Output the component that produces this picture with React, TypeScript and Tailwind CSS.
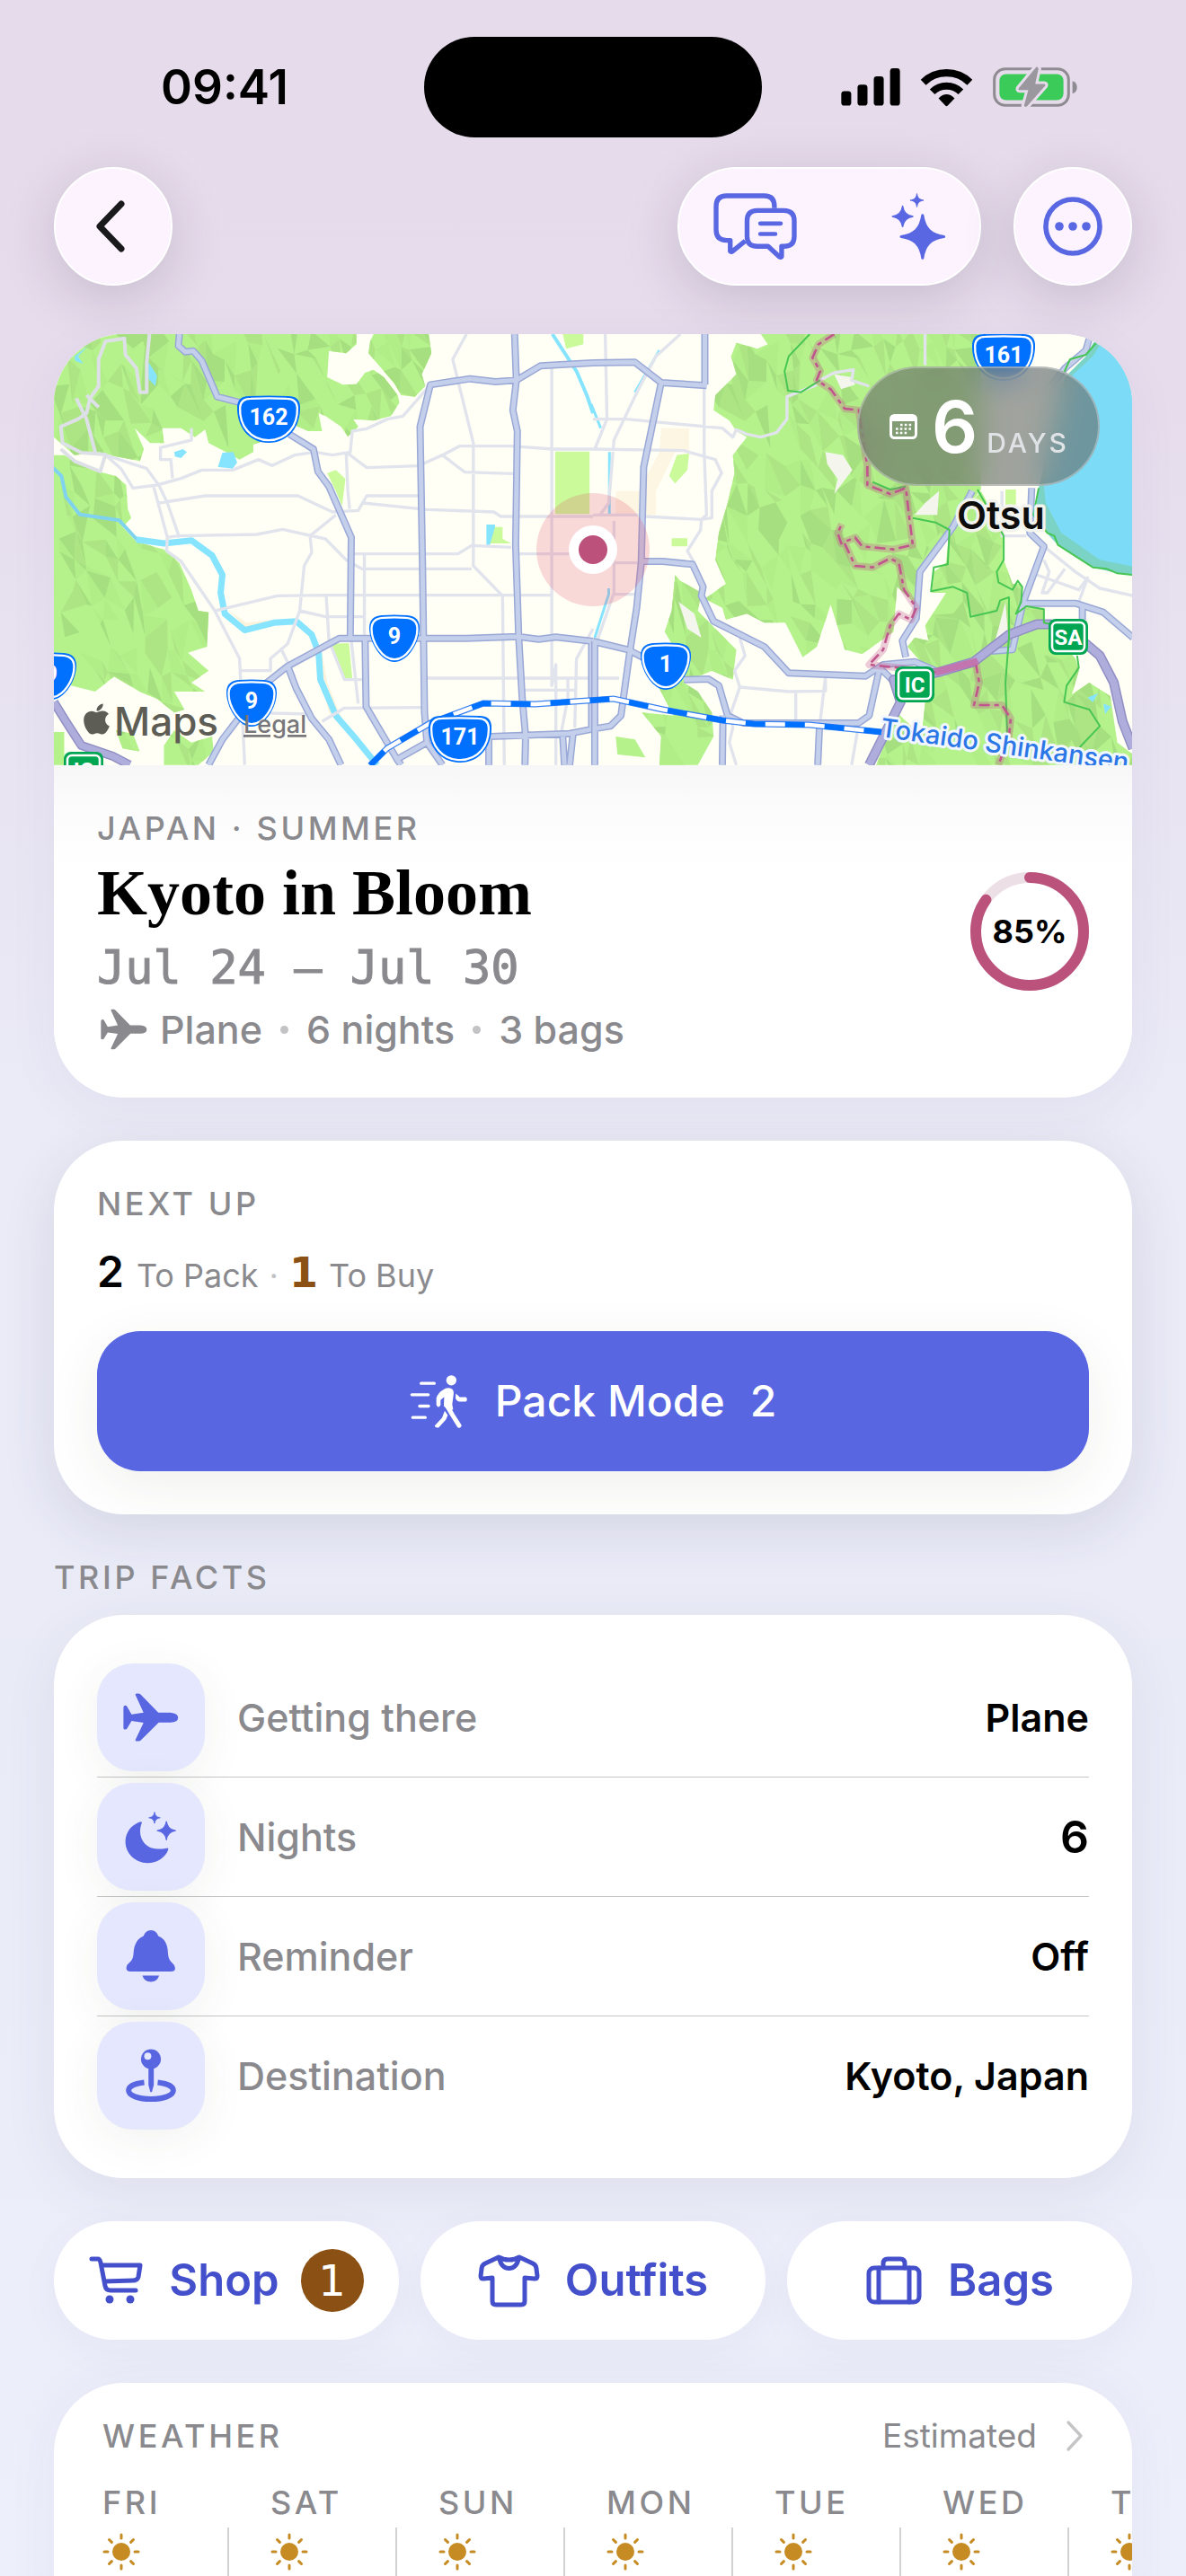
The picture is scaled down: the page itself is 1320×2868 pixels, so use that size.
import React from "react";
import { FaApple } from "react-icons/fa";

const STAR =
  "M0-1C.09-.38.38-.09 1 0C.38.09.09.38 0 1C-.09.38-.38.09-1 0C-.38-.09-.09-.38 0-1Z";

function Star({ x, y, r }: { x: number; y: number; r: number }) {
  return (
    <path
      d={STAR}
      transform={`translate(${x} ${y}) scale(${r * 0.93})`}
      fill="currentColor"
      stroke="currentColor"
      strokeWidth={0.13}
      strokeLinejoin="round"
    />
  );
}

function PlaneIcon({ className }: { className: string }) {
  return (
    <svg viewBox="201 211 158 139" className={className} fill="currentColor" aria-hidden="true">
      <path d="M202 253Q202 247 208 247Q211 247 213 251L225 272L259 267L236 217Q235 213 239 213H245Q249 213 252 217L301 267H335Q357 269 357 281Q357 294 335 295H302L252 345Q249 348 245 348H239Q235 348 236 344L259 296L225 291L213 311Q211 315 207 315Q202 315 202 311Z" />
    </svg>
  );
}

function MoonIcon() {
  return (
    <svg viewBox="208 528 150 150" className="h-[60px] w-[60px]" fill="currentColor" aria-hidden="true">
      <path d="M254 561C229 569 212 590 212 617C212 650 240 676 273 676C299 676 323 661 331 639Q332 633 326 635C318 637 310 637 301 637C272 636 253 615 253 588C253 578 255 572 257 566Q259 560 254 561Z" />
      <Star x={293} y={550} r={17} />
      <Star x={326} y={586} r={27} />
    </svg>
  );
}

function BellIcon() {
  return (
    <svg viewBox="200 860 146 145" className="h-[60px] w-[60px]" fill="currentColor" aria-hidden="true">
      <path d="M273 862C283 862 290 869 293 878C310 885 318 900 319 922C320 945 328 945 336 957Q344 974 328 974H217Q202 974 208 957C217 945 225 945 226 922C228 900 236 885 253 878C256 869 263 862 273 862Z" />
      <path d="M250 985H295C292 996 283 1002 273 1002C262 1002 253 996 250 985Z" />
    </svg>
  );
}

function PinIcon() {
  return (
    <svg viewBox="200 1188 146 152" className="h-[60px] w-[60px]" fill="currentColor" aria-hidden="true">
      <path
        d="M254 1283C225 1286 210 1295 210 1306C210 1320 238 1330 273 1330C308 1330 336 1320 336 1306C336 1295 320 1286 292 1283"
        fill="none"
        stroke="currentColor"
        strokeWidth="15"
      />
      <path d="M266 1235H281V1290L276 1309Q273 1312 271 1309L266 1290Z" />
      <circle cx="273" cy="1217" r="28" />
      <circle cx="264" cy="1209" r="10" fill="#e4e7fd" />
    </svg>
  );
}

function StatusBar() {
  return (
    <div className="grid h-[186px] shrink-0 grid-cols-[1fr_auto_1fr] items-start pt-[41px]">
      <div className="flex h-[113px] items-center justify-center pl-7">
        <span className="text-[53px] leading-none font-semibold">09:41</span>
      </div>
      <div className="h-[112px] w-[376px] rounded-full bg-black" />
      <div className="flex h-[112px] items-center gap-[22px] pl-[88px]">
        <svg viewBox="50 77 197 125" className="h-[42px] w-[66px]" aria-label="Signal">
          <rect x="51" y="153" width="33" height="48" rx="10" />
          <rect x="105" y="131" width="33" height="70" rx="10" />
          <rect x="159" y="104" width="33" height="97" rx="10" />
          <rect x="213" y="77" width="33" height="124" rx="10" />
        </svg>
        <svg viewBox="312 74 178 129" className="h-[43px] w-[59px]" aria-label="Wi-Fi">
          <path d="M323 121A112 112 0 0 1 479 121" fill="none" stroke="black" strokeWidth="25" />
          <path d="M353 153A68 68 0 0 1 449 153" fill="none" stroke="black" strokeWidth="24" />
          <path d="M374 175Q401 148 428 175L405 199Q401 203 397 199Z" />
        </svg>
        <svg viewBox="554 71 281 137" className="h-[46px] w-[94px]" aria-label="Battery charging">
          <rect x="559" y="79" width="247" height="121" rx="36" fill="none" stroke="#8f8b92" strokeWidth="9" />
          <rect x="576" y="96" width="213" height="87" rx="22" fill="#3acb58" />
          <path d="M819 119Q834 124 834 140Q834 156 819 161Z" fill="#8f8b92" />
          <path
            d="M699 72L640 143Q637 149 644 149H672L658 201Q661 208 668 203L728 135Q731 129 724 129H695L706 78Q704 71 699 72Z"
            fill="#9b979e"
            stroke="#e6dbea"
            strokeWidth="18"
            paintOrder="stroke"
          />
        </svg>
      </div>
    </div>
  );
}

const glass =
  "flex h-[132px] items-center rounded-full border-2 border-white bg-[#fcf3ff] shadow-[0_14px_60px_rgba(40,30,60,0.17)]";

function Toolbar() {
  return (
    <header className="flex shrink-0 items-center px-[60px] text-[#5967e2]">
      <button type="button" aria-label="Back" className={`${glass} w-[132px] justify-center text-[#1a1a1c]`}>
        <svg viewBox="0 0 34 58" className="mr-2 h-[58px] w-[34px]" fill="none" stroke="currentColor" strokeWidth="7" strokeLinecap="round" strokeLinejoin="round">
          <path d="M30 4L6 29L30 54" />
        </svg>
      </button>
      <div className={`${glass} mr-9 ml-auto w-[338px] justify-between px-[37px]`}>
        <button type="button" aria-label="Chat">
          <svg viewBox="131 104 284 227" className="h-[76px] w-[95px]" fill="none" stroke="currentColor" strokeWidth="16" strokeLinejoin="round">
            <path d="M337 157V151Q337 116 303 116H178Q143 116 143 151V229Q143 264 178 264H190V300Q193 304 198 300L240 266" />
            <path d="M280 165H368Q403 165 403 199V251Q403 284 369 284H361V318Q358 322 354 319L316 284H280Q246 284 246 251V199Q246 165 280 165Z" />
            <path d="M290 208H358M290 243H340" strokeWidth="14" strokeLinecap="round" />
          </svg>
        </button>
        <button type="button" aria-label="Suggestions">
          <svg viewBox="724 103 184 227" className="h-[76px] w-[61px]">
            <Star x={829} y={251} r={77} />
            <Star x={762} y={183} r={37} />
            <Star x={810} y={129} r={24} />
          </svg>
        </button>
      </div>
      <button type="button" aria-label="More" className={`${glass} w-[132px] justify-center`}>
        <svg viewBox="0 0 66 66" className="h-[66px] w-[66px]" fill="currentColor">
          <circle cx="33" cy="33" r="30" fill="none" stroke="currentColor" strokeWidth="5.6" />
          <circle cx="18" cy="33" r="4.8" />
          <circle cx="33" cy="33" r="4.8" />
          <circle cx="48" cy="33" r="4.8" />
        </svg>
      </button>
    </header>
  );
}

function Shield({ x, y, label, wide = false }: { x: number; y: number; label: string; wide?: boolean }) {
  const body = wide
    ? "M-22-26Q0-27 22-26Q34-26 35-15C36 8 22 26 0 26C-22 26-36 8-35-15Q-34-26-22-26Z"
    : "M-14-26Q0-27 14-26Q28-25 28-12C28 4 15 26 0 26C-15 26-28 4-28-12Q-28-25-14-26Z";
  return (
    <g transform={`translate(${x} ${y})`}>
      <path d={body} fill="#0070ff" />
      <path d={body} transform="scale(.91 .89)" fill="#0070ff" stroke="white" strokeWidth="2.6" />
      <text y="6" textAnchor="middle" fontSize="25" fontWeight="700" fontFamily="Roboto, sans-serif" fill="white">
        {label}
      </text>
    </g>
  );
}

function Junction({ x, y, label }: { x: number; y: number; label: string }) {
  return (
    <g transform={`translate(${x} ${y})`}>
      <rect x="-22" y="-20" width="44" height="40" rx="8" fill="#00a651" />
      <rect x="-18" y="-16" width="36" height="32" rx="5" fill="none" stroke="white" strokeWidth="2.6" />
      <text y="9" textAnchor="middle" fontSize="24" fontWeight="700" fontFamily="Roboto, sans-serif" fill="white">
        {label}
      </text>
    </g>
  );
}

const WEST = "translate(60 360) scale(.38265 .33333)";
const EAST = "translate(660 360) scale(.38903 .33333)";

const westForest =
  "M0 36H880V70L850 100L800 92L795 180L840 205L880 203L905 165L930 155L960 180L1000 240L1005 265L980 310L930 325L870 320L885 345L855 378L835 345L790 310L770 300L780 360L740 360L700 340L640 380L580 405V430L540 455L500 430L450 400L440 355L410 380L370 350L315 350L320 400L280 400L235 350L262 420L250 460L180 445L130 430L60 440L20 400L0 380ZM920 60L915 100L945 140L990 200L1010 240L1050 245L1080 210L1070 170L1098 100L1090 36H930ZM0 440H30L130 495L180 510L210 540L215 620L225 650L200 680L240 730L320 755L365 800L400 890L420 960L450 965L445 1080L390 1100L450 1160L400 1200L440 1230L350 1230L380 1290L350 1300L300 1255L250 1230L175 1180L120 1230L50 1210L0 1100ZM320 1410L350 1360L400 1400L460 1380L465 1430L420 1475H320ZM180 1360L230 1370L250 1430L200 1420ZM0 1365H30V1475H0Z";
const eastForest =
  "M480 36L500 70L470 85L410 65L395 110L410 170L350 240L345 290L390 325L410 360L440 380L400 440L405 500L385 600L360 700L350 790L380 870L320 920L370 950L380 990L440 970L490 1000L550 1000L600 1115L640 1080L680 940L720 1090L770 1105L860 1030L870 880L925 940L940 820L1020 690L1110 555V36ZM975 830L1010 800L1020 680L1110 560L1175 700V790L1200 870H1225V950H1290V1000L1380 1120L1390 1160L1370 1240L1420 1200L1480 1245L1500 1400L1545 1440V1475H810L870 1300L940 1380L960 1160L900 1080L920 1050L960 1060L950 1010L1010 900H970ZM235 840L250 860L310 900L300 960L350 1020L410 1090L400 1190L340 1160L260 1200L300 1230L340 1300L345 1380L300 1475H190L195 1380L140 1300L230 1310L190 1220L230 1080L205 1030L225 960ZM65 1380L120 1390L150 1450L70 1440Z";

const westMinor =
  "M1200 36L1160 120L1220 400V810L1305 910L1310 1475M1448 150V1210L1460 1140V1475M1095 205L1015 310L970 320L910 352L868 360L862 430L810 440L760 430L700 440L635 475L595 455L520 490L430 490L370 518L300 540L230 550L195 485L150 440M850 430L910 482L1060 476L1130 440L1180 410H1330L1450 420H1568M850 430L855 560L860 620M1130 440L1195 497L1335 502M305 600L440 576H710L810 630L885 625L910 576H1065M900 600L1085 622L1280 630L1300 645H1568M330 715L360 710L590 705L665 688L790 720L850 790L895 820H1215M865 770H1175L1215 742L1330 748M1350 770H1568M150 440L270 485L305 540L330 600L365 715M290 545L330 715L328 760L370 795L468 960L540 1120L555 1475M470 960L560 935L650 910L790 908H1450M820 640L745 710L750 765L728 810L715 960L680 1070L630 1120V1160H540M715 960L790 980H900M903 770V1040M792 910L800 1060L845 1190H905M865 1060L885 1270M1085 1185H1568M780 1330L845 1285L1075 1283M560 1300L750 1305M400 350V390L310 415V455H340L345 518M1370 1225H1515M1495 1190V1250L1475 1370M1568 1020L1520 1120L1515 1350M660 1085L700 1180";
const westMajor =
  "M365 36L362 75L382 95L405 92L430 125L475 245L560 270M685 370L755 420L768 495L800 545L865 715L862 1050M1340 36L1345 190L1335 290L1348 360L1343 740L1352 1050L1362 1250L1372 1380L1370 1475M1568 132L1415 142L1345 190L1285 195L1210 185L1095 205L1065 345L1072 800L1078 1300L1085 1400L1130 1475M450 1475L490 1390L530 1330L620 1200L680 1145L830 1052H1200L1350 1046L1410 1055L1460 1048L1568 1062M680 1145L705 1220L750 1320L800 1390L835 1475M905 1052L908 1280L1000 1460L1010 1475M1000 1455L1085 1400M1270 1380L1500 1370L1568 1355M1265 1380V1475M1480 1380L1485 1475M1510 1370L1500 1475M1564 1062V1355";
const eastMinor =
  "M35 36L40 320L5 420M250 36L180 110L130 220L60 390L45 600L20 640M0 320L95 320L370 350L400 380L410 355L440 370L480 380L525 365L555 320V245L640 205M318 210V430M0 420L260 425L350 455L368 500L340 560V650L310 655L150 645M318 430L325 640L310 655L308 690L270 760L290 800M0 640H130M0 800H130M60 905H120M60 660V900L0 1100M420 1050L435 1110L405 1160L420 1215L395 1300L400 1350L390 1400L410 1475M420 1215L560 1230L665 1228V1180L650 1330M580 1230V1335M0 1185H75M950 36V140M650 190L690 165L745 155L740 190L790 210M1290 745L1380 830L1450 885L1545 910M1290 790L1305 830L1285 900H1300L1350 820M1270 840L1390 890L1415 850L1390 930M1170 560V710H1240M740 1475L760 1340";
const eastMajor =
  "M0 132L120 130L195 198L325 208M320 36V205M195 198L145 480L138 800L125 950L105 1100L80 1310L50 1345L0 1355M138 795H200L285 805L315 880L310 910L345 995L490 1080L560 1168L780 1178L830 1140L920 1130L980 1160M0 1062L100 1090L150 1120M260 1190L330 1188L360 1210L385 1310L430 1335H760L790 1310L820 1150L860 1195M372 1310L370 1475M648 1345L643 1475M895 1115L885 1060L925 985L935 830L1030 680L1085 560M1420 50L1410 90L1350 150L1310 210M1255 550L1250 700L1290 745L1230 935L1200 1090L1140 1095M1230 935H1380L1460 965L1545 1050M1400 940V990M5 1062V1475";
const expressway =
  "M790 1475L880 1265L860 1190L920 1180L990 1165L1090 1130L1190 1040L1270 1005H1310L1400 1060L1450 1110L1490 1200L1515 1330L1545 1420";
const border =
  "M690 36L645 70L628 115L650 160L640 190L680 220L720 285L760 290L785 480V540L850 570L895 550L905 650L915 740L860 755L770 745L750 715L710 735L700 700L712 670M720 735L750 810L800 815L850 785L875 800L890 890L925 950L910 990L875 970L850 1010L830 1090L790 1140L870 1150L980 1165L1095 1135L1105 1200L1090 1275H1170L1195 1320L1190 1380L1160 1475";
const parkLines =
  "M620 36L560 110L548 160L558 225L595 230L650 190M800 530L850 555L895 545M915 650L980 665L1020 690L1015 805L975 815L967 895L1030 880L1070 900L1080 980L1155 960L1165 925L1190 915V1050L1180 1200L1185 1370M1100 555L1175 710V790L1155 830L1160 865L1200 890L1215 860L1228 880L1225 930L1210 970L1240 945L1290 955V1000L1330 1010M1385 1110L1390 1150L1355 1210L1348 1265L1420 1290L1450 1345L1385 1425M1440 65L1410 105L1365 120L1345 170M1275 550L1260 640L1300 700L1320 710L1330 740L1430 815L1470 820L1500 835L1545 840";

// Triangulated hill shading: one path per tone over a jittered grid.
const reliefTones = ["#ade585", "#a6df80", "#b1ee88"];
const relief = (() => {
  let seed = 11;
  const rand = () => {
    seed = (seed * 16807) % 2147483647;
    return seed / 2147483647;
  };
  const cols = 42;
  const rows = 20;
  const points = Array.from({ length: rows + 1 }, (_, r) =>
    Array.from({ length: cols + 1 }, (_, c) => [
      Math.round(c * 38 - 20 + (rand() - 0.5) * 40 + r * 5),
      Math.round(r * 78 + (rand() - 0.5) * 80),
    ]),
  );
  const tones = ["", "", ""];
  const add = (list: number[][]) => {
    const pick = Math.floor(rand() * 6);
    if (pick < 3) tones[pick] += `M${list.map((p) => p.join(" ")).join("L")}Z`;
  };
  for (let r = 0; r < rows; r++) {
    for (let c = 0; c < cols; c++) {
      const a = points[r][c];
      const b = points[r][c + 1];
      const d = points[r + 1][c];
      const e = points[r + 1][c + 1];
      add([a, b, e]);
      add([a, e, d]);
    }
  }
  return tones;
})();

function Forest({ d, clip }: { d: string; clip: string }) {
  return (
    <>
      <clipPath id={clip}>
        <path d={d} />
      </clipPath>
      <path d={d} fill="#b6f28c" />
      <g clipPath={`url(#${clip})`}>
        {relief.map((path, i) => (
          <path key={i} d={path} fill={reliefTones[i]} />
        ))}
      </g>
    </>
  );
}

function Road({ d, color, edge, width }: { d: string; color: string; edge: string; width: number }) {
  return (
    <>
      <path d={d} stroke={edge} strokeWidth={width + 3} vectorEffect="non-scaling-stroke" />
      <path d={d} stroke={color} strokeWidth={width} vectorEffect="non-scaling-stroke" />
    </>
  );
}

const rail =
  "M412 852L431 833L479 805L538 783L596 784L683 778L738 790L804 802L839 806L901 807L981 815";

function KyotoMap() {
  return (
    <svg viewBox="60 372 1200 480" className="block w-full" role="img" aria-label="Map of Kyoto">
      <rect x="60" y="372" width="1200" height="480" fill="#fffff6" />
      <g transform={WEST} fill="none" strokeLinejoin="round">
        <Forest d={westForest} clip="west-forest" />
        <path d="M1458 428H1558V637H1458ZM795 500L820 490L848 520L838 610L820 560ZM805 1070L858 1068L868 1185H840ZM1480 36H1540V70L1490 85ZM1265 680H1305V720L1330 735H1265Z" fill="#cbfa9b" />
        <path d="M780 1100L795 1200L830 1300L850 1350L900 1420L930 1470L800 1300L775 1180ZM400 725L480 800L460 770L410 740ZM510 960L560 1000L640 990L560 1020Z" fill="#fdf3dc" />
        <path d="M-5 480L22 510L35 580L75 638L190 658L240 720L320 735" stroke="#7fd3ef" strokeWidth="4" vectorEffect="non-scaling-stroke" />
        <path d="M240 722L320 735L400 725L460 775L490 840L485 900L497 970L555 1025L640 1000L705 995L750 1040L770 1100L775 1190L820 1310L880 1390L940 1475" stroke="#86e4ff" strokeWidth="7" vectorEffect="non-scaling-stroke" />
        <path d="M350 430L375 420L387 430L370 450L352 445ZM490 432L522 430L533 465L520 485L477 480ZM275 130L300 175L295 210L275 185ZM60 110L100 75L70 110L85 135L62 125ZM1258 672H1283V680L1268 740H1258Z" fill="#86e4ff" />
        <path d="M1450 36L1520 160L1550 240L1568 300" stroke="#86e4ff" strokeWidth="4" vectorEffect="non-scaling-stroke" />
        <path d={westMinor} stroke="#e1e4ec" strokeWidth="3.4" vectorEffect="non-scaling-stroke" />
        <path d="M278 36L270 130V230H250L240 150L208 105L205 50L150 60L130 120V210L105 250L95 300L70 320L20 345L25 400L80 432L150 438L135 495L60 460L20 420M65 250L95 320L120 430M95 240L130 280" stroke="#dde0e6" strokeWidth="4" vectorEffect="non-scaling-stroke" />
        <Road d={westMajor} color="#c4cfec" edge="#9aa8d6" width={5} />
        <Road d="M0 1265L35 1330L80 1410L170 1445L220 1475" color="#aeaddb" edge="#918fc4" width={7} />
      </g>
      <g transform={EAST} fill="none" strokeLinejoin="round">
        <path d="M195 350H275V430H235L180 560V640H65V560H130L190 430Z" fill="#fdf6e3" />
        <Forest d={eastForest} clip="east-forest" />
        <path d="M665 430L715 440L742 490L690 570L700 520L670 470ZM690 170L740 180L750 205L710 220ZM950 600L990 560L985 640L920 640ZM1160 1020L1180 930L1188 1050L1150 1060ZM245 930L290 970L310 1050L270 1020Z" fill="#f4f6ee" />
        <path d="M218 510L240 440L275 435L270 490L235 535ZM225 718H270V745H225ZM1180 555H1210V605H1180Z" fill="#cbfa9b" />
        <path d="M1445 36H1545V840L1500 835L1430 815L1330 740L1290 690L1265 640L1275 550L1350 180L1410 110Z" fill="#7bd3c6" />
        <path d="M1470 36H1545V812L1450 790L1340 700L1295 600L1290 540L1365 180L1430 110Z" fill="#7cdcf8" />
        <path d="M1415 1250L1445 1235L1430 1265ZM1460 1270L1482 1280L1465 1305Z" fill="#86e4ff" />
        <path d="M47 430V640M45 885V905L5 1050M-5 270L22 350M190 90L120 230" stroke="#86e4ff" strokeWidth="3" vectorEffect="non-scaling-stroke" />
        <path d={eastMinor} stroke="#e1e4ec" strokeWidth="3.4" vectorEffect="non-scaling-stroke" />
        <Road d={eastMajor} color="#c4cfec" edge="#9aa8d6" width={5} />
        <Road d={expressway} color="#aeaddb" edge="#918fc4" width={8} />
        <path d={parkLines} stroke="#47c653" strokeWidth="2" vectorEffect="non-scaling-stroke" />
        <path d={border} stroke="#c0568c" strokeOpacity=".3" strokeWidth="8" vectorEffect="non-scaling-stroke" />
        <path d={border} stroke="#c0568c" strokeWidth="2.6" strokeDasharray="12 5 5 5" vectorEffect="non-scaling-stroke" />
        <path d="M980 1165L1100 1128" stroke="#c275ae" strokeWidth="8" vectorEffect="non-scaling-stroke" />
      </g>
      <g fill="none">
        <path d={rail} stroke="#3b82f0" strokeWidth="7" />
        <path d={rail} stroke="white" strokeWidth="4.4" />
        <path d={rail} stroke="#0070ff" strokeWidth="6" strokeDasharray="22 22" />
      </g>
      <Shield x={299} y={467} label="162" wide />
      <Shield x={439} y={711} label="9" />
      <Shield x={280} y={783} label="9" />
      <Shield x={57} y={753} label="9" />
      <Shield x={512} y={823} label="171" wide />
      <Shield x={1117} y={398} label="161" wide />
      <Shield x={741} y={742} label="1" />
      <Junction x={1189} y={709} label="SA" />
      <Junction x={1018} y={762} label="IC" />
      <Junction x={93} y={857} label="IC" />
      <g fontFamily="Inter, sans-serif" strokeLinejoin="round" paintOrder="stroke">
        <text x="1065" y="589" fontSize="43" fontWeight="600" fill="#0d0d0d" stroke="#f3f3ee" strokeWidth="7">
          Otsu
        </text>
        <text transform="translate(979 820) rotate(8)" fontSize="29" fontWeight="500" fill="#2b77e6" stroke="#f2f6ff" strokeWidth="6">
          Tokaido Shinkansen
        </text>
        <text x="127" y="819" fontSize="44" fontWeight="500" fill="#5d5d56">
          Maps
        </text>
        <text x="271" y="816" fontSize="27" fontWeight="500" fill="#77777b" textDecoration="underline">
          Legal
        </text>
      </g>
      <FaApple x={88} y={781} size={39} color="#5d5d56" />
      <circle cx="660" cy="612" r="63" fill="#e04060" fillOpacity=".2" />
      <circle cx="660" cy="612" r="27" fill="white" />
      <circle cx="660" cy="612" r="16" fill="#bc527c" />
    </svg>
  );
}

function Caption({ children }: { children: React.ReactNode }) {
  return <h2 className="text-[36px] leading-[44px] font-medium tracking-widest text-[#8a8a8e]">{children}</h2>;
}

const card = "overflow-hidden rounded-[78px] bg-white shadow-[0_14px_60px_rgba(60,60,120,0.05)]";

function TripCard() {
  return (
    <section className={card}>
      <div className="relative">
        <KyotoMap />
        <div className="absolute top-9 right-9 flex h-[133px] items-center rounded-full border-2 border-white/30 bg-[#656a68]/62 pr-8 pl-[34px] text-white backdrop-blur-lg">
          <svg viewBox="0 0 31 28" className="mr-4 h-7 w-[31px]" aria-hidden="true">
            <rect x="1.5" y="1.5" width="28" height="25" rx="4" fill="none" stroke="white" strokeWidth="3" />
            <path d="M1 5Q1 1 5 1H26Q30 1 30 5V8H1Z" fill="white" />
            <path d="M12 12H26M7 16.5H26M7 21H20" stroke="white" strokeWidth="2.6" strokeDasharray="2.6 2.2" />
          </svg>
          <div className="flex items-baseline gap-2.5">
            <span className="text-[80px] leading-none font-semibold">6</span>
            <span className="text-[30px] leading-none font-medium tracking-widest text-[#e0e3e6]">DAYS</span>
          </div>
        </div>
      </div>
      <div className="flex items-center justify-between bg-[linear-gradient(#f6f7f6,#fcfcfc_50px,#ffffff_120px)] p-12">
        <div className="flex flex-col gap-2">
          <Caption>JAPAN · SUMMER</Caption>
          <h1 className="font-['Liberation_Serif',serif] text-[72px] leading-[84px] font-bold">Kyoto in Bloom</h1>
          <p className="font-['DejaVu_Sans_Mono',monospace] text-[52px] leading-[66px] text-[#8a8a8e] [-webkit-text-stroke:1px_#8a8a8e]">Jul 24 — Jul 30</p>
          <p className="flex items-center text-[43px] leading-[56px] font-medium text-[#8a8a8e]">
            <PlaneIcon className="mr-3.5 ml-1 h-[46px] w-[52px]" />
            Plane
            <span className="mx-5 h-[9px] w-[9px] rounded-full bg-[#c3c3c6]" />6 nights
            <span className="mx-5 h-[9px] w-[9px] rounded-full bg-[#c3c3c6]" />3 bags
          </p>
        </div>
        <div className="grid h-[132px] w-[132px] place-items-center">
          <svg viewBox="0 0 132 132" className="col-start-1 row-start-1 -rotate-90" fill="none" strokeWidth="12" aria-hidden="true">
            <circle cx="66" cy="66" r="60" stroke="#eddfe6" />
            <circle cx="66" cy="66" r="60" stroke="#bb527b" pathLength="100" strokeDasharray="85 100" strokeLinecap="round" />
          </svg>
          <span className="col-start-1 row-start-1 text-[36px] font-bold">85%</span>
        </div>
      </div>
    </section>
  );
}

function NextUp() {
  return (
    <section className={`${card} mt-12 p-12 shadow-[0_16px_60px_rgba(60,60,90,0.12)]`}>
      <Caption>NEXT UP</Caption>
      <p className="mt-6 mb-8 flex items-baseline text-[36px] leading-[60px] text-[#8a8a8e]">
        <span className="mr-3.5 text-[48px] font-semibold text-black">2</span>
        To Pack
        <span className="mx-3 text-[#c3c3c6]">·</span>
        <span className="mr-3 font-['DejaVu_Sans',sans-serif] text-[46px] font-bold text-[#8b5013]">1</span>
        To Buy
      </p>
      <button type="button" className="flex h-[156px] w-full items-center justify-center rounded-[48px] bg-[#5966e2] text-[48px] font-medium text-white shadow-[0_16px_60px_rgba(60,60,40,0.08)]">
        <svg viewBox="55 86 195 182" className="mr-[30px] h-[61px] w-[65px]" fill="currentColor" stroke="currentColor" strokeLinecap="round" strokeLinejoin="round" aria-hidden="true">
          <circle cx="194" cy="106" r="17" stroke="none" />
          <path d="M93 116H137M62 154H117M88 192H118M65 230H107" strokeWidth="10" fill="none" />
          <path d="M184 131C200 131 204 143 201 156L197 186L200 203L186 208L169 192L170 161L158 172V188Q151 202 144 188V165Q149 148 166 138Q174 131 184 131Z" stroke="none" />
          <path d="M182 195L198 222L220 257" strokeWidth="15" fill="none" />
          <path d="M172 208L182 222L176 237L152 263Q142 266 138 258L163 231Z" stroke="none" />
          <path d="M209 150L222 162H243Q250 170 243 177H220Q210 174 208 166Z" stroke="none" />
        </svg>
        Pack Mode
        <span className="ml-7">2</span>
      </button>
    </section>
  );
}

const facts = [
  { label: "Getting there", value: "Plane", icon: <PlaneIcon className="h-14 w-[62px]" /> },
  { label: "Nights", value: "6", icon: <MoonIcon />, large: true },
  { label: "Reminder", value: "Off", icon: <BellIcon /> },
  { label: "Destination", value: "Kyoto, Japan", icon: <PinIcon /> },
];

function TripFacts() {
  return (
    <section className="mt-12">
      <Caption>TRIP FACTS</Caption>
      <dl className={`${card} mt-5 divide-y divide-[#c6c6c8] p-12 shadow-[0_16px_60px_rgba(60,60,90,0.08)]`}>
        {facts.map((fact) => (
          <div key={fact.label} className="flex items-center py-1.5 text-[43px]">
            <dt className="flex items-center gap-9 font-medium text-[#8a8a8e]">
              <span className="grid h-[120px] w-[120px] place-items-center rounded-[40px] bg-[#e4e7fd] text-[#5966e2] shadow-[0_10px_50px_rgba(60,70,40,0.07)]">
                {fact.icon}
              </span>
              {fact.label}
            </dt>
            <dd className={fact.large ? "ml-auto text-[50px] font-semibold" : "ml-auto font-semibold"}>{fact.value}</dd>
          </div>
        ))}
      </dl>
    </section>
  );
}

function Chips() {
  const chip =
    "flex h-[132px] items-center justify-center rounded-full bg-white text-[49px] font-semibold text-[#4450cb] shadow-[0_12px_50px_rgba(60,60,120,0.04)]";
  const stroke = {
    fill: "none",
    stroke: "currentColor",
    strokeWidth: 5,
    strokeLinecap: "round" as const,
    strokeLinejoin: "round" as const,
  };
  return (
    <nav className="mt-12 grid grid-cols-3 gap-6">
      <button type="button" className={chip}>
        <svg viewBox="2 5 61 54" className="mr-7 h-[54px] w-[61px]" {...stroke} aria-hidden="true">
          <path d="M5 8H12Q14 8 15 12L20 38Q21 43 26 43H54M16 15H59L57 28Q56 32 51 32L19 33" />
          <circle cx="25" cy="53" r="4.5" fill="currentColor" stroke="none" />
          <circle cx="48" cy="53" r="4.5" fill="currentColor" stroke="none" />
        </svg>
        Shop
        <span className="ml-6 grid h-[70px] w-[70px] place-items-center rounded-full bg-[#8b5013] font-['DejaVu_Sans',sans-serif] text-[48px] leading-none font-normal text-white">1</span>
      </button>
      <button type="button" className={chip}>
        <svg viewBox="1 2 69 61" className="mr-7 h-[61px] w-[69px]" {...stroke} aria-hidden="true">
          <path d="M24 6L9 13Q5 15 5 19L4 27Q4 30 7 30L17 29V55Q17 59 21 59H49Q53 59 53 55V29L64 30Q67 30 67 27L66 19Q66 15 62 13L47 6Q42 9 35.5 9Q29 9 24 6ZM25 8C27 22 44 22 46 8" />
        </svg>
        Outfits
      </button>
      <button type="button" className={chip}>
        <svg viewBox="0 1 64 56" className="mr-7 h-14 w-16" {...stroke} aria-hidden="true">
          <rect x="4" y="15" width="56" height="38" rx="6" />
          <path d="M20 15V10Q20 5 25 5H39Q44 5 44 10V15M15 15V53M49 15V53" />
        </svg>
        Bags
      </button>
    </nav>
  );
}

function SunIcon() {
  return (
    <svg viewBox="-21 -21 42 42" className="h-[42px] w-[42px] text-[#c68b22]" aria-hidden="true">
      <circle r="10" fill="currentColor" />
      <path
        d="M0-15V-19M0 15V19M15 0H19M-15 0H-19M10.600-10.600L13.500-13.500M-10.600-10.600L-13.500-13.500M10.600 10.600L13.500 13.500M-10.600 10.600L-13.500 13.500"
        stroke="currentColor"
        strokeWidth="3"
        strokeLinecap="round"
      />
    </svg>
  );
}

function Weather() {
  return (
    <section className="mt-12 flex-1 overflow-hidden rounded-t-[78px] bg-white pt-[37px] pl-[54px] shadow-[0_0_60px_rgba(60,60,120,0.05)]">
      <div className="flex items-center justify-between pr-[54px]">
        <Caption>WEATHER</Caption>
        <a href="#weather" className="flex items-center gap-8 text-[37px] leading-[44px] text-[#8a8a8e]">
          Estimated
          <svg viewBox="0 0 20 36" className="h-9 w-5" fill="none" stroke="#c5c5c8" strokeWidth="3.4" strokeLinecap="round" strokeLinejoin="round" aria-hidden="true">
            <path d="M3 3L17 18L3 33" />
          </svg>
        </a>
      </div>
      <ul className="mt-[30px] flex">
        {["FRI", "SAT", "SUN", "MON", "TUE", "WED", "THU"].map((day) => (
          <li key={day} className="w-[187px] shrink-0">
            <Caption>{day}</Caption>
            <div className="mt-1.5 mr-[46px] border-r-2 border-[#d2d2d4] pt-1.5 pb-20">
              <SunIcon />
            </div>
          </li>
        ))}
      </ul>
    </section>
  );
}

export default function App() {
  return (
    <div className="flex h-screen flex-col overflow-hidden bg-[linear-gradient(#e6dbea_0%,#e6dcec_16%,#e8e4f2_30%,#ebebf7_45%,#e9ebf7_65%,#edeffb_100%)] font-['Inter',sans-serif] text-black">
      <StatusBar />
      <Toolbar />
      <main className="mt-[54px] flex flex-1 flex-col px-[60px]">
        <TripCard />
        <NextUp />
        <TripFacts />
        <Chips />
        <Weather />
      </main>
    </div>
  );
}
